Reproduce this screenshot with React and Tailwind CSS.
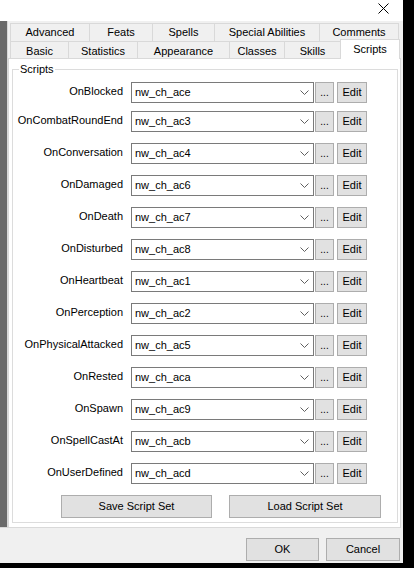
import React from "react";

const rows = [
  ["OnBlocked", "nw_ch_ace"],
  ["OnCombatRoundEnd", "nw_ch_ac3"],
  ["OnConversation", "nw_ch_ac4"],
  ["OnDamaged", "nw_ch_ac6"],
  ["OnDeath", "nw_ch_ac7"],
  ["OnDisturbed", "nw_ch_ac8"],
  ["OnHeartbeat", "nw_ch_ac1"],
  ["OnPerception", "nw_ch_ac2"],
  ["OnPhysicalAttacked", "nw_ch_ac5"],
  ["OnRested", "nw_ch_aca"],
  ["OnSpawn", "nw_ch_ac9"],
  ["OnSpellCastAt", "nw_ch_acb"],
  ["OnUserDefined", "nw_ch_acd"],
];

const topTabs = [
  ["Advanced", "w-[79px]"],
  ["Feats", "w-[63px]"],
  ["Spells", "w-[62px]"],
  ["Special Abilities", "w-[105px]"],
  ["Comments", "w-[80px] border-r"],
];

const bottomTabs = [
  ["Basic", "w-[58px]"],
  ["Statistics", "w-[69px]"],
  ["Appearance", "w-[92px]"],
  ["Classes", "w-[55px]"],
  ["Skills", "w-[56px]"],
];

function Chevron() {
  return (
    <svg width="9" height="5" viewBox="0 0 9 5" className="shrink-0">
      <path d="M0.5 0.5 L4.5 4.5 L8.5 0.5" fill="none" stroke="#606060" strokeWidth="1" />
    </svg>
  );
}

function Btn({ children, className = "" }) {
  return (
    <div className={"flex items-center justify-center bg-[#e1e1e1] border border-[#adadad] " + className}>
      {children}
    </div>
  );
}

function ScriptRow({ label, value, first }) {
  return (
    <div className={"flex items-center h-[21px] " + (first ? "" : "mt-[11px]")}>
      <div className="w-[110px] text-right pb-[3px] leading-[13px] whitespace-nowrap">{label}</div>
      <div className="ml-[8px] w-[183px] h-[21px] bg-white border border-[#7a7a7a] flex items-center pl-[3px] pr-[4px]">
        <span className="flex-1">{value}</span>
        <Chevron />
      </div>
      <Btn className="ml-[1px] w-[19px] h-[21px] text-[10px]">...</Btn>
      <Btn className="ml-[3px] w-[30px] h-[21px]">Edit</Btn>
    </div>
  );
}

export default function App() {
  return (
    <div
      className="w-[414px] h-[568px] bg-black overflow-hidden text-[11px] text-black"
      style={{ fontFamily: '"Liberation Sans", Arial, sans-serif' }}
    >
      <div className="w-[403px] h-[563px] bg-[#f0f0f0] flex flex-col">
        <div className="h-[21px] bg-white flex justify-end items-start pr-[14px] pt-[3px] shrink-0">
          <svg width="11" height="11" viewBox="0 0 11 11">
            <path d="M0.5 0.5 L10.5 10.5 M10.5 0.5 L0.5 10.5" stroke="#000" strokeWidth="1" />
          </svg>
        </div>
        <div className="flex items-start">
          <div className="w-[8px] h-[507px] bg-[#6a6a6a] border-r border-b border-[#d8d8d8] shrink-0" />
          <div className="w-[393px] flex flex-col">
            <div className="pl-[2px] pt-[2px]">
              <div className="flex h-[18px]">
                {topTabs.map(([t, w]) => (
                  <div key={t} className={"flex items-center justify-center border-t border-l border-[#d9d9d9] bg-[#f0f0f0] " + w}>
                    {t}
                  </div>
                ))}
              </div>
              <div className="flex h-[17px]">
                {bottomTabs.map(([t, w]) => (
                  <div key={t} className={"flex items-center justify-center pt-[2px] border-t border-l border-[#d9d9d9] bg-[#f0f0f0] " + w}>
                    {t}
                  </div>
                ))}
                <div className="relative z-10 w-[60px] h-[20px] -mt-[2px] flex items-center justify-center pb-[1px] bg-white border-t border-l border-r border-[#d9d9d9]">
                  Scripts
                </div>
              </div>
            </div>
            <div className="h-[470px] bg-white border border-[#d9d9d9] pl-[3px] pr-[2px] pt-[4px]">
              <fieldset className="border border-[#dcdcdc] h-[460px] pt-[6px] pl-[0px]">
                <legend className="ml-[6px] px-[1px] leading-[13px]">Scripts</legend>
                {rows.map(([l, v], i) => (
                  <div key={l} className={i === 1 ? "-mt-[3px]" : ""}>
                    <ScriptRow label={l} value={v} first={i === 0} />
                  </div>
                ))}
                <div className="flex mt-[11px]">
                  <Btn className="ml-[48px] w-[151px] h-[23px]">Save Script Set</Btn>
                  <Btn className="ml-[17px] w-[152px] h-[23px]">Load Script Set</Btn>
                </div>
              </fieldset>
            </div>
          </div>
        </div>
        <div className="flex justify-end pr-[3px] mt-[10px]">
          <Btn className="w-[73px] h-[23px]">OK</Btn>
          <Btn className="ml-[7px] w-[74px] h-[23px]">Cancel</Btn>
        </div>
      </div>
    </div>
  );
}
